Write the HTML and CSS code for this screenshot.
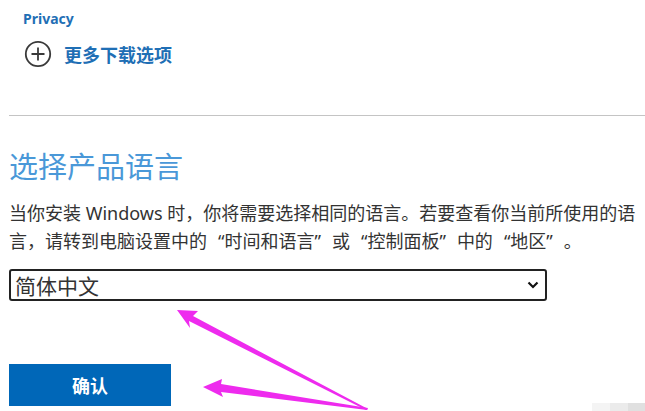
FILE: index.html
```html
<!DOCTYPE html>
<html lang="zh-CN">
<head>
<meta charset="utf-8">
<title>选择产品语言</title>
<link rel="stylesheet" href="styles.css">
</head>
<body>
<div class="page">
  <a class="privacy" href="#">Privacy</a>
  <a class="more" href="#">
    <svg class="plus" width="28" height="28" viewBox="0 0 28 28" aria-hidden="true">
      <circle cx="14" cy="14" r="12.2" fill="none" stroke="#3a3a3a" stroke-width="1.8"/>
      <path d="M14 7.5V20.5M7.5 14H20.5" stroke="#3a3a3a" stroke-width="1.8" fill="none"/>
    </svg>
    <span>更多下载选项</span>
  </a>
  <hr class="divider">
  <h2 class="title">选择产品语言</h2>
  <p class="desc">当你安装 Windows 时，你将需要选择相同的语言。若要查看你当前所使用的语言，请转到电脑设置中的<q>时间和语言</q>或<q>控制面板</q>中的<q>地区</q>。</p>
  <div class="select">
    <span>简体中文</span>
    <svg width="12" height="8" viewBox="0 0 12 8" aria-hidden="true">
      <path d="M1.5 1.5L6 6L10.5 1.5" fill="none" stroke="#111" stroke-width="2.2"/>
    </svg>
  </div>
  <button class="confirm" type="button">确认</button>
</div>
<svg class="arrows" width="645" height="411" viewBox="0 0 645 411" aria-hidden="true">
  <path d="M177 310 L198 311 L193 316 L368 409 L366 410 L189 321 L190 328 Z" fill="#ee2bee"/>
  <path d="M203 387 L222 379 L221 384 L368 408 L367 410 L221 392 L223 397 Z" fill="#ee2bee"/>
</svg>
<div class="mark"><i class="m1"></i><i class="m2"></i><i class="m3"></i></div>
</body>
</html>
```
FILE: styles.css
```css
html, body {
  margin: 0;
  padding: 0;
  background: #fff;
  width: 645px;
  height: 411px;
  overflow: hidden;
}
.page {
  display: flex;
  flex-direction: column;
  align-items: flex-start;
  padding: 10px 0 0 9px;
  font-family: "Noto Sans", "Noto Sans CJK SC", sans-serif;
  color: #333;
}
.privacy {
  margin-left: 14px;
  font-size: 14px;
  font-weight: 700;
  line-height: 18px;
  color: #1f6fb5;
  text-decoration: none;
}
.more {
  display: flex;
  align-items: center;
  gap: 12px;
  margin: 12px 0 0 15px;
  text-decoration: none;
}
.more span {
  font-family: "Noto Sans CJK SC", sans-serif;
  font-size: 18px;
  font-weight: 700;
  color: #1f6fb5;
  line-height: 26px;
}
.divider {
  align-self: stretch;
  margin: 47px 0 0 0;
  border: 0;
  border-top: 1px solid #c4c4c4;
  height: 0;
}
.title {
  margin: 29px 0 0 0;
  font-family: "Noto Sans CJK SC", sans-serif;
  font-size: 29px;
  font-weight: 400;
  line-height: 40px;
  color: #4a98d8;
}
.desc {
  margin: 14px 0 0 0;
  width: 632px;
  font-family: "Noto Sans", "Noto Sans CJK SC", sans-serif;
  font-size: 18px;
  line-height: 28px;
  color: #333;
}
.desc q {
  quotes: "\201C" "\201D";
  padding: 0 11px;
}
.select {
  box-sizing: border-box;
  width: 538px;
  height: 32px;
  margin-top: 14px;
  display: flex;
  align-items: center;
  justify-content: space-between;
  padding: 0 4px 0 4px;
  border: 2px solid #222;
  border-radius: 3px;
  font-family: "Noto Sans CJK SC", sans-serif;
  font-size: 21px;
  color: #333;
}
.select svg {
  margin-right: 2px;
}
.confirm {
  width: 162px;
  height: 42px;
  margin-top: 63px;
  border: 0;
  background: #0067b8;
  color: #fff;
  font-family: "Noto Sans CJK SC", sans-serif;
  font-size: 18px;
  font-weight: 700;
  padding: 0;
}
.arrows {
  position: absolute;
  left: 0;
  top: 0;
  pointer-events: none;
}
.mark {
  position: absolute;
  left: 592px;
  top: 403px;
  display: flex;
}
.mark i {
  display: block;
  width: 18px;
  height: 8px;
}
.mark .m1 { background: #f4f4f4; }
.mark .m2 { background: #ebebeb; }
.mark .m3 { background: #e0e0e0; }
```
